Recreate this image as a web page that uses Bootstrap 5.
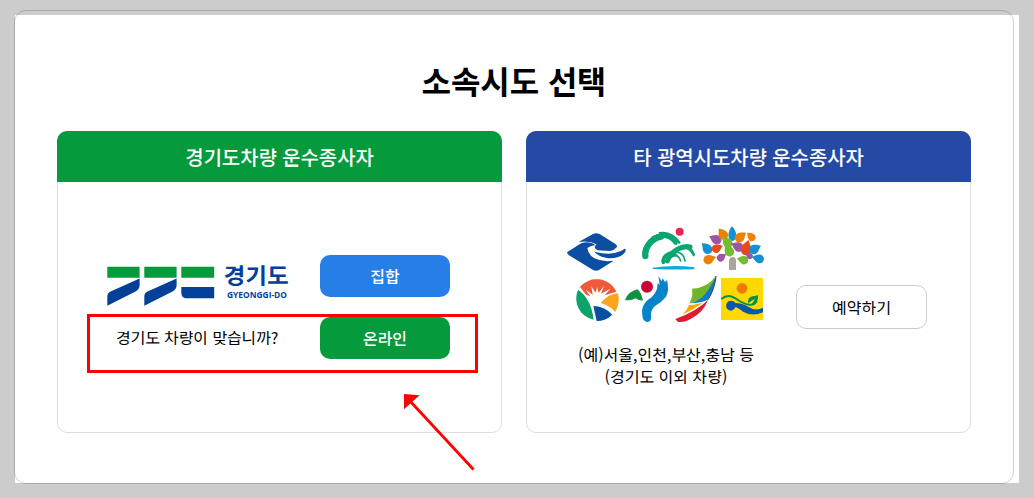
<!DOCTYPE html>
<html lang="ko">
<head>
  <meta charset="UTF-8">
  <meta name="viewport" content="width=device-width, initial-scale=1.0">
  <title>소속시도 선택</title>
  <link href="https://cdn.jsdelivr.net/npm/bootstrap@5.3.0/dist/css/bootstrap.min.css" rel="stylesheet">
  <style>
    body {
      background: #ccc;
      color: #000;
      font-family: "Noto Sans KR", "Noto Sans CJK KR", sans-serif;
      font-size: 16px;
      height: 498px;
      overflow: hidden;
    }
    .sheet { margin: 15px 15px 0; height: 468px; }
    .frame {
      margin: -5px 5px -1px -1px;
      padding: 46px 42px 0;
      border: 1px solid rgba(0,0,0,.175);
      border-radius: 12px;
    }
    .page-title { font-size: 32px; line-height: 46px; margin-bottom: 28px; letter-spacing: -.1px; }
    .region-card { height: 302px; border-color: #ddd; border-radius: 10px; }
    .region-head {
      height: 51px;
      margin: -1px -1px 0;
      border-radius: 10px 10px 0 0;
      font-size: 20px;
      font-weight: 500;
      letter-spacing: -.1px;
    }
    .head-green { background: #059a3c; }
    .head-blue { background: #254aa5; }
    .choice-grid {
      display: grid;
      grid-template-columns: 213px 130px;
      grid-auto-rows: 42px;
      row-gap: 20px;
      margin: 73px 0 0 49px;
    }
    .region-btn { height: 42px; border: 0; border-radius: 10px; font-weight: 500; padding: 0; color: #fff; }
    .btn-blue, .btn-blue:hover { background: #267ee6; color: #fff; }
    .btn-green, .btn-green:hover { background: #059a3c; color: #fff; }
    .btn-plain { width: 131px; height: 44px; border: 1px solid #ccc; background: #fff; color: #000; font-weight: 400; }
    .ask { padding: 0 0 2px 9px; letter-spacing: -.12px; }
    .others { margin: 38px 0 0 33px; width: 210px; }
    .others p { line-height: 22px; margin-top: 13px; padding-left: 2px; }
    .reserve { margin: 103px 0 0 26px; }
    .mark-box { left: 29px; top: 182px; width: 391px; height: 59px; border: 3px solid #f00; pointer-events: none; }
    .mark-arrow { left: 344px; top: 260px; pointer-events: none; z-index: 2; }
  </style>
</head>
<body>

<main class="sheet bg-white d-flex">
  <div class="frame flex-grow-1">
    <h1 class="page-title text-center fw-bold">소속시도 선택</h1>

    <div class="row gx-4">
      <div class="col-6">
        <section class="card region-card position-relative">
          <div class="region-head head-green text-white d-flex align-items-center justify-content-center">경기도차량 운수종사자</div>
          <div class="choice-grid">
            <svg width="190" height="52" viewBox="107 255 190 52" role="img" aria-label="경기도">
              <g fill="#059a3c">
                <path d="M107.300 266.700h32.300v11h-32.300z"/>
                <path d="M144.300 266.700h32.300v11h-32.300z"/>
                <path d="M181.300 266.700h32.900v11h-32.900z"/>
              </g>
              <g fill="#043f98">
                <path id="stroke" d="M139.600 278.600V285Q139.600 289 136 291.300L107.300 305.700V296Q107.300 293 110 291.700z"/>
                <use href="#stroke" x="37"/>
                <path d="M181.300 287h32.900v11.300H186.500Q181.300 298.300 181.300 292.500z"/>
                <text x="223.800" y="284.300" font-size="22.500" font-weight="700" textLength="65" lengthAdjust="spacingAndGlyphs">경기도</text>
                <text x="227" y="298.200" font-family="Open Sans, sans-serif" font-size="8.800" font-weight="700" textLength="60" lengthAdjust="spacingAndGlyphs">GYEONGGI-DO</text>
              </g>
            </svg>
            <button type="button" class="btn region-btn btn-blue">집합</button>
            <div class="ask d-flex align-items-center">경기도 차량이 맞습니까?</div>
            <button type="button" class="btn region-btn btn-green">온라인</button>
          </div>
          <div class="mark-box position-absolute"></div>
          <svg class="mark-arrow position-absolute" width="76" height="80" viewBox="402 392 76 80">
            <path d="M473.500 469.500L410 401" stroke="#f00" stroke-width="2.800"/>
            <path d="M404 394l15.500 1.200-15.500 14z" fill="#f00"/>
          </svg>
        </section>
      </div>

      <div class="col-6">
        <section class="card region-card">
          <div class="region-head head-blue text-white d-flex align-items-center justify-content-center">타 광역시도차량 운수종사자</div>
          <div class="d-flex">
            <div class="others">
              <svg class="d-block" width="210" height="110" viewBox="0 0 630 330">
                <!-- 부산 -->
                <path fill="#0b4ea2" d="M22 96Q40 85 56 74Q64 68 78 67Q96 67 106 75Q93 76 82 84Q84 104 103 115Q127 127 161 122L117 150Q108 155 98 149L27 106Q20 101 22 96z"/>
                <path fill="#0b4ea2" d="M56 66L99 42Q109 37 120 43L165 71Q174 78 170 82Q163 91 150 93L113 91Q104 86 104 82Q105 76 110 73Q88 61 56 66z"/>
                <path fill="#0b4ea2" d="M103 95Q151 108 181 94Q190 89 193 86Q202 88 193 99Q178 116 145 115Q115 110 103 95z"/>
                <!-- 산과 강 -->
                <g fill="none" stroke="#09a66d" stroke-linecap="round">
                  <path stroke-width="19" d="M256 108C253 84 272 56 303 50"/>
                  <path stroke-width="13" d="M280 54C308 40 331 47 347 68"/>
                  <path stroke-width="4" d="M290 45C318 33 345 47 357 70M298 38C322 34 345 45 360 68"/>
                  <path stroke-width="11" d="M310 127C306 113 320 99 345 97"/>
                  <path stroke-width="7" d="M325 122C329 111 338 106 350 106"/>
                  <path stroke-width="15" d="M322 123C331 96 362 75 390 81"/>
                  <path stroke-width="6" d="M350 88C374 76 392 86 401 106M365 80C384 76 396 88 402 103"/>
                  <path stroke-width="5" d="M348 96C368 98 372 109 375 123M339 104C353 105 359 112 362 123"/>
                </g>
                <circle cx="359" cy="35" r="12" fill="#e62850"/>
                <path d="M278 143Q340 134 403 142V148Q340 150 278 147z" fill="#10a8e1"/>
                <!-- 나무 -->
                <path fill="#aca49b" d="M507 150V123Q508 111 518 111T528 123V150z"/>
                <defs>
                  <path id="drop" d="M-3-20C3-14 14-6 14 5A14 14 0 0 1-14 5C-14-5-6-10-3-20z"/>
                  <clipPath id="treeTop"><path d="M420 20H615V150H420z"/></clipPath>
                </defs>
                <g clip-path="url(#treeTop)">
                  <use href="#drop" fill="#1591d1" transform="translate(440 84) rotate(-38)"/>
                  <use href="#drop" fill="#9e55a2" transform="translate(466 57) rotate(-60)"/>
                  <use href="#drop" fill="#ee8200" transform="translate(488 41) rotate(-30)"/>
                  <use href="#drop" fill="#1591d1" transform="translate(517 40) scale(.85 1.200)"/>
                  <use href="#drop" fill="#ee8200" transform="translate(542 50) rotate(45) scale(-1 1)"/>
                  <use href="#drop" fill="#72bf2d" transform="translate(501 66) rotate(-35)"/>
                  <use href="#drop" fill="#9e55a2" transform="translate(532 79) rotate(-60)"/>
                  <use href="#drop" fill="#e84915" transform="translate(559 83) rotate(10) scale(-1.100 1.200)"/>
                  <use href="#drop" fill="#ee8200" transform="translate(573 49) rotate(-40) scale(.8)"/>
                  <use href="#drop" fill="#e84915" transform="translate(472 84) rotate(60) scale(-.9 .9)"/>
                  <use href="#drop" fill="#ee8200" transform="translate(449 117) rotate(65) scale(-1 1)"/>
                  <use href="#drop" fill="#9e55a2" transform="translate(485 111) rotate(50) scale(-.8 .8)"/>
                  <use href="#drop" fill="#72bf2d" transform="translate(506 91) rotate(-30)"/>
                  <use href="#drop" fill="#1591d1" transform="translate(585 86) rotate(55) scale(-1 1)"/>
                  <use href="#drop" fill="#72bf2d" transform="translate(548 119) rotate(-70) scale(.9)"/>
                  <use href="#drop" fill="#9e55a2" transform="translate(567 106) rotate(-45) scale(.65)"/>
                  <use href="#drop" fill="#1591d1" transform="translate(594 115) rotate(-70) scale(.95)"/>
                </g>
                <!-- 해돋이 원형 -->
                <path fill="#f05a3b" d="M60 201A65 65 0 0 1 169 215L134 226L151 206L123 221L132 197L116 219L112 202L106 218L94 199L98 224L77 209L91 229L78 224z"/>
                <path fill="#0aa46b" d="M54 209Q93 235 101 299A65 65 0 0 1 54 209z"/>
                <path fill="#fba51e" d="M122 249Q146 221 174 220Q181 248 166 276Q149 257 122 249z"/>
                <path fill="#0b4ea2" d="M100 258Q132 258 157 284Q137 303 110 303z"/>
                <!-- 서울 -->
                <circle cx="261" cy="200" r="18" fill="#c70537"/>
                <path fill="#0d9145" d="M196 238Q206 214 232 208Q242 214 249 241Q234 242 227 235Q213 243 196 240z"/>
                <path fill="#0783c9" d="M293 190L299 194L295 168L305 184L308 175L315 186L321 180Q329 213 317 232Q304 248 286 257Q271 268 273 293Q273 306 261 306Q248 304 247 286Q242 259 262 241Q293 224 293 190z"/>
                <!-- 돛 -->
                <path fill="#72b52b" d="M396 206Q439 206 468 168Q456 208 441 229Q422 242 388 250Q400 230 396 206z"/>
                <path fill="#087fc4" d="M468 168Q464 210 443 240Q418 250 389 250Q421 243 437 220Q453 201 468 168z"/>
                <path fill="#f7a600" d="M387 255Q415 254 431 246Q404 267 368 283Q383 269 387 255z"/>
                <path fill="#df1b2f" d="M346 297Q410 274 444 240Q429 279 393 296Q370 309 353 305z"/>
                <path fill="none" stroke="#4b296d" stroke-width="3" d="M444 239C457 219 466 193 468 168"/>
                <!-- 충남 -->
                <path fill="#ffd900" d="M483 174H609V300H483z"/>
                <circle cx="546" cy="205" r="16" fill="#ef7a00"/>
                <path fill="#0857aa" d="M526 249Q549 250 562 259Q585 275 609 263V277Q578 291 549 275Q533 263 527 261Q520 272 512 272A15 15 0 1 1 526 249z"/>
                <path fill="none" stroke="#07914a" stroke-width="6" d="M484 237C509 217 526 236 544 246C565 258 583 257 591 242"/>
                <path fill="#07914a" d="M565 250Q561 232 578 229Q588 228 594 225Q596 254 574 254Q580 243 586 237Q574 241 565 250z"/>
              </svg>
              <p class="text-center mb-0">(예)서울,인천,부산,충남 등<br>(경기도 이외 차량)</p>
            </div>
            <div class="reserve">
              <button type="button" class="btn region-btn btn-plain">예약하기</button>
            </div>
          </div>
        </section>
      </div>
    </div>
  </div>
</main>

<script src="https://cdn.jsdelivr.net/npm/bootstrap@5.3.0/dist/js/bootstrap.bundle.min.js"></script>
</body>
</html>
